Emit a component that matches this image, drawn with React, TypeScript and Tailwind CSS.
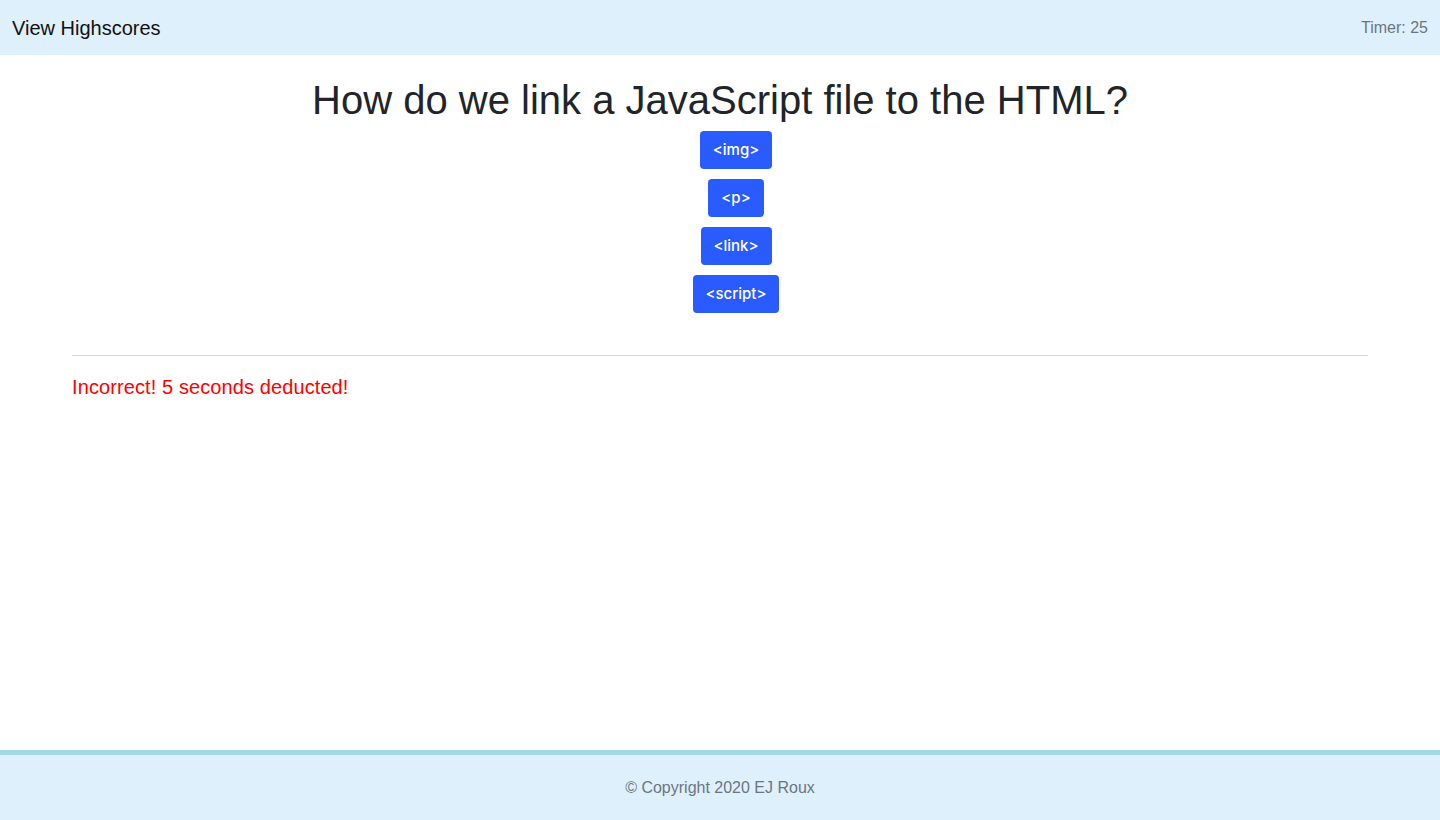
const choices = ['<img>', '<p>', '<link>', '<script>'];

export default function App() {
  return (
    <div className="flex h-[820px] flex-col bg-white font-['Liberation_Sans',Arial,sans-serif] text-[#212529]">
      <nav className="flex h-[55px] items-center justify-between bg-[#dff0fd] px-3">
        <a className="text-[20px] text-[#111]">View Highscores</a>
        <span className="text-base text-[#6c757d]">Timer: 25</span>
      </nav>

      <main className="flex-1">
        <h1 className="mt-[21px] text-center text-[40px] leading-[48px]">
          How do we link a JavaScript file to the HTML?
        </h1>
        <div className="mt-[7px] flex flex-col items-center gap-[10px] pl-8">
          {choices.map((c) => (
            <button
              key={c}
              className="h-[38px] rounded-[4px] bg-[#2a5bff] px-[13px] font-['Inter',sans-serif] text-[15px] font-medium text-white"
            >
              {c}
            </button>
          ))}
        </div>
        <div className="mx-[72px] mt-[42px] border-t border-[#d6d6d6]" />
        <p className="mx-[72px] mt-[19px] text-[20px] leading-[24px] tracking-[0.1px] text-[#ff0000]">
          Incorrect! 5 seconds deducted!
        </p>
      </main>

      <footer className="flex h-[70px] items-center justify-center border-t-[5px] border-[#a2d8e6] bg-[#dff0fd] text-base text-[#6c757d]">
        © Copyright 2020 EJ Roux
      </footer>
    </div>
  );
}
